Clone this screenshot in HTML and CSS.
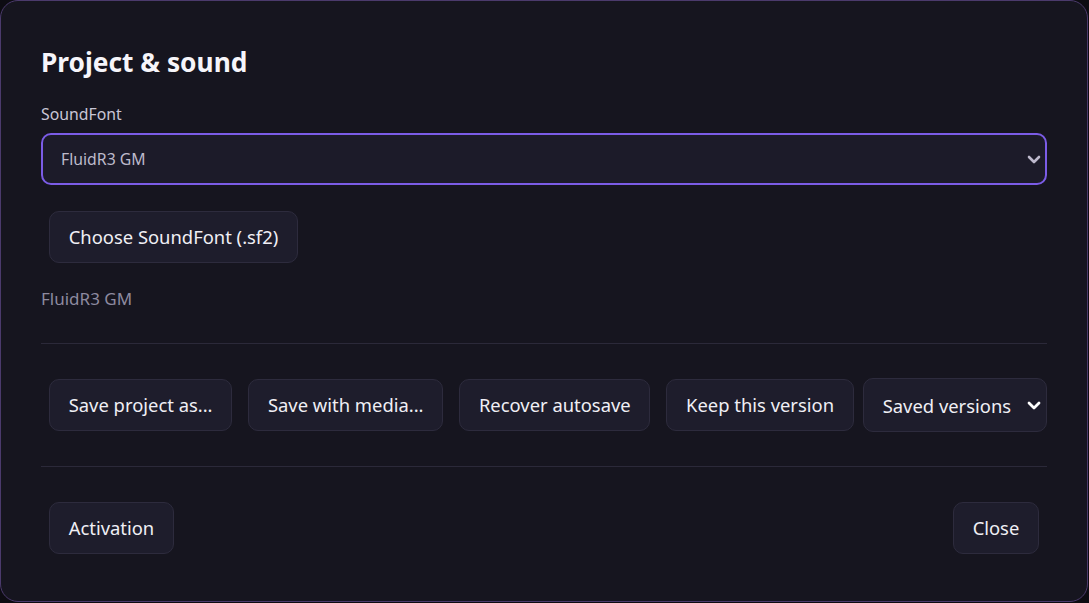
FILE: index.html
```html
<!DOCTYPE html>
<html lang="en">
<head>
<meta charset="utf-8">
<title>Project &amp; sound</title>
<link rel="stylesheet" href="styles.css">
</head>
<body>
<div class="dialog">
  <h1 class="title">Project &amp; sound</h1>
  <label class="field-label">SoundFont</label>
  <div class="select select-main">
    <span class="select-text">FluidR3 GM</span>
    <svg class="chev chev-muted" viewBox="0 0 14 9" width="14" height="9"><path d="M2 2 L7 7 L12 2" fill="none" stroke="currentColor" stroke-width="2.6" stroke-linecap="round" stroke-linejoin="round"/></svg>
  </div>
  <div class="row row-first">
    <button class="btn">Choose SoundFont (.sf2)</button>
  </div>
  <div class="muted">FluidR3 GM</div>
  <hr class="divider divider-a">
  <div class="row">
    <button class="btn">Save project as...</button>
    <button class="btn">Save with media...</button>
    <button class="btn">Recover autosave</button>
    <button class="btn">Keep this version</button>
    <div class="select select-versions">
      <span>Saved versions</span>
      <svg class="chev" viewBox="0 0 14 9" width="14" height="9"><path d="M2 2 L7 7 L12 2" fill="none" stroke="currentColor" stroke-width="2.8" stroke-linecap="round" stroke-linejoin="round"/></svg>
    </div>
  </div>
  <hr class="divider divider-b">
  <div class="row footer">
    <button class="btn">Activation</button>
    <button class="btn">Close</button>
  </div>
</div>
</body>
</html>
```

FILE: styles.css
```css
* { box-sizing: border-box; }
html, body {
  margin: 0;
  padding: 0;
  background: #0d0c12;
  height: 100%;
}
body {
  font-family: "Noto Sans", "Open Sans", sans-serif;
  color: #ecebf2;
}
.dialog {
  width: 1088px;
  height: 602px;
  background: #16151f;
  border: 1px solid #4b3a6c;
  border-radius: 18px;
  padding: 41px 40px 40px;
  display: flex;
  flex-direction: column;
}
.title {
  margin: 0;
  font-size: 26.3px;
  font-weight: 700;
  line-height: 40px;
  color: #f6f5fa;
}
.field-label {
  display: block;
  font-size: 15.8px;
  color: #c9c6d6;
  line-height: 20px;
  margin-top: 22px;
}
.select {
  display: flex;
  align-items: center;
  justify-content: space-between;
  background: #1c1b29;
  border-radius: 10px;
}
.select-main {
  margin-top: 9px;
  height: 52px;
  border: 2px solid #7b5ce6;
  padding: 0 4px 0 18px;
  font-size: 15.8px;
  color: #bdbacb;
}
.chev { display: block; }
.chev-muted { color: #bdb9cc; }
.row {
  display: flex;
  gap: 16px;
  padding: 0 8px;
  align-items: center;
}
.row-first { margin-top: 26px; }
.btn {
  font-family: inherit;
  font-size: 18.4px;
  color: #f0eff5;
  background: #1e1d2c;
  border: 1px solid #2d2b3d;
  border-radius: 10px;
  height: 52px;
  padding: 0 18.7px;
  line-height: 1;
  flex: none;
}
.muted {
  margin-top: 25px;
  font-size: 17px;
  color: #8d8a9f;
  line-height: 22px;
}
.divider {
  border: 0;
  height: 1px;
  background: #2b2939;
  width: 100%;
  flex: none;
}
.divider-a { margin: 33px 0 34px; }
.divider-b { margin: 34px 0 35px; }
.select-versions {
  flex: 1 1 auto;
  min-width: 0;
  margin-left: -7px;
  margin-right: -8px;
  height: 54px;
  border: 1px solid #2d2b3d;
  background: #1e1d2c;
  padding: 0 5px 0 19px;
  font-size: 18.4px;
  color: #f0eff5;
  white-space: nowrap;
}
.select-versions .chev { color: #ffffff; }
.footer { justify-content: space-between; }
```
